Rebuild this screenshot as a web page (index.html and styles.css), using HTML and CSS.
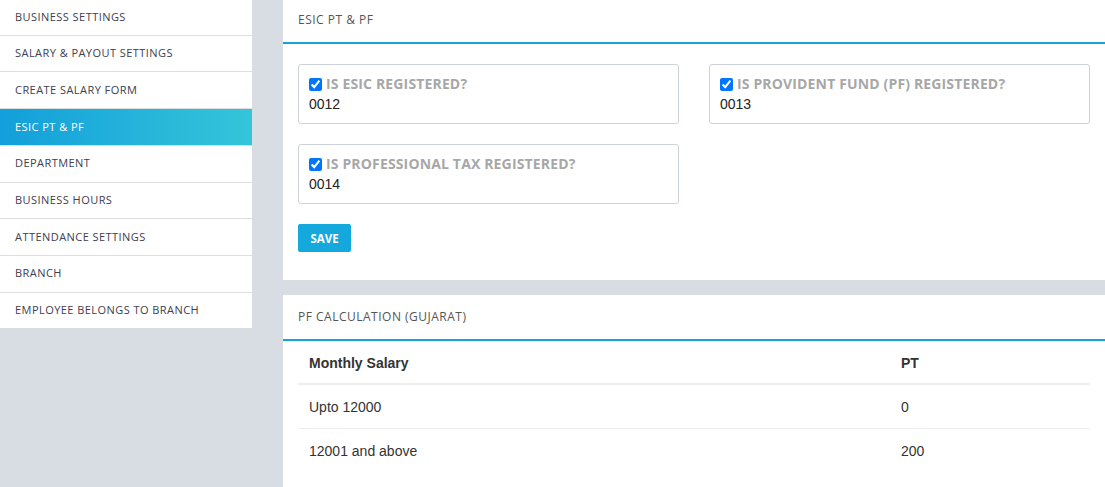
FILE: index.html
```html
<!DOCTYPE html>
<html>
<head>
    <title>ESIC PT &amp; PF</title>
    <link rel="stylesheet" href="styles.css">
</head>
<body>
    <div class="layout">
        <ul class="side-menu">
            <li><a href="#">Business Settings</a></li>
            <li><a href="#">Salary &amp; Payout Settings</a></li>
            <li><a href="#">Create Salary Form</a></li>
            <li class="active"><a href="#">ESIC PT &amp; PF</a></li>
            <li><a href="#">Department</a></li>
            <li><a href="#">Business Hours</a></li>
            <li><a href="#">Attendance Settings</a></li>
            <li><a href="#">Branch</a></li>
            <li><a href="#">Employee Belongs To Branch</a></li>
        </ul>

        <div class="content">
            <div class="panel">
                <div class="panel-heading">ESIC PT &amp; PF</div>
                <div class="panel-body">
                    <div class="form-row">
                        <div class="field-box">
                            <label><input type="checkbox" checked> Is ESIC Registered?</label>
                            <div class="field-value">0012</div>
                        </div>
                        <div class="field-box">
                            <label><input type="checkbox" checked> Is Provident Fund (PF) Registered?</label>
                            <div class="field-value">0013</div>
                        </div>
                        <div class="field-box">
                            <label><input type="checkbox" checked> Is Professional Tax Registered?</label>
                            <div class="field-value">0014</div>
                        </div>
                    </div>
                    <button class="btn-save">Save</button>
                </div>
            </div>

            <div class="panel">
                <div class="panel-heading">PF Calculation (Gujarat)</div>
                <div class="panel-body table-body">
                    <table class="calc-table">
                        <thead>
                            <tr>
                                <th class="col-salary">Monthly Salary</th>
                                <th>PT</th>
                            </tr>
                        </thead>
                        <tbody>
                            <tr>
                                <td>Upto 12000</td>
                                <td>0</td>
                            </tr>
                            <tr>
                                <td>12001 and above</td>
                                <td>200</td>
                            </tr>
                        </tbody>
                    </table>
                </div>
            </div>
        </div>
    </div>
</body>
</html>
```

FILE: styles.css
```css
body {
    margin: 0;
    background: #d8dce3;
    font-family: "Liberation Sans", Arial, sans-serif;
    font-size: 14px;
    color: #333;
}
.layout {
    display: flex;
    align-items: flex-start;
    gap: 31px;
    margin-top: -1px;
}
.side-menu {
    list-style: none;
    margin: 0;
    padding: 0;
    width: 252px;
    flex-shrink: 0;
    background: #fff;
}
.side-menu li {
    border-bottom: 1px solid #dedede;
}
.side-menu li:last-child {
    border-bottom: none;
}
.side-menu a {
    display: block;
    padding: 9.5px 15px;
    line-height: 16.7px;
    font-family: "Open Sans", sans-serif;
    font-size: 11px;
    letter-spacing: 0.45px;
    text-transform: uppercase;
    color: #40404f;
    text-decoration: none;
}
.side-menu li.active {
    background: linear-gradient(to right, #129fdb, #35c5d9);
}
.side-menu li.active a {
    color: #fff;
}
.content {
    flex: 1;
    margin-top: -1px;
}
.panel {
    background: #fff;
    margin-bottom: 15px;
}
.panel:last-child {
    margin-bottom: 0;
}
.panel-heading {
    height: 44px;
    line-height: 44px;
    padding: 0 15px;
    border-bottom: 2px solid #17a3d7;
    font-family: "Open Sans", sans-serif;
    font-size: 12px;
    letter-spacing: 0.5px;
    text-transform: uppercase;
    color: #555;
}
.panel-body {
    padding: 20px 15px 28px;
}
.table-body {
    padding: 0 15px 15px;
}
.form-row {
    display: grid;
    grid-template-columns: 1fr 1fr;
    column-gap: 30px;
    row-gap: 20px;
    margin-bottom: 20px;
}
.field-box {
    border: 1px solid #cdd1da;
    border-radius: 3px;
    padding: 9px 10px 9px;
}
.field-box label {
    display: flex;
    align-items: center;
    gap: 4px;
    line-height: 20px;
    font-family: "Open Sans", sans-serif;
    font-size: 14px;
    font-weight: bold;
    letter-spacing: 0.15px;
    text-transform: uppercase;
    color: #a7a7a7;
}
.field-box input {
    margin: 0;
    width: 13px;
    height: 13px;
}
.field-value {
    line-height: 20px;
    color: #222;
}
.btn-save {
    display: block;
    width: 53px;
    height: 28px;
    padding: 0;
    border: none;
    border-radius: 2px;
    background: #14a8dd;
    color: #fff;
    font-family: "Open Sans", sans-serif;
    font-size: 11.5px;
    font-weight: bold;
    text-transform: uppercase;
    cursor: pointer;
}
.calc-table {
    width: 100%;
    border-collapse: collapse;
}
.calc-table th,
.calc-table td {
    text-align: left;
    padding: 12px 11px 11px;
    line-height: 20px;
}
.calc-table th {
    padding-bottom: 10px;
    font-weight: bold;
    color: #333;
    border-bottom: 2px solid #eee;
}
.calc-table td {
    border-bottom: 1px solid #eee;
}
.calc-table tbody tr:last-child td {
    border-bottom: none;
}
.col-salary {
    width: 570px;
}
```
